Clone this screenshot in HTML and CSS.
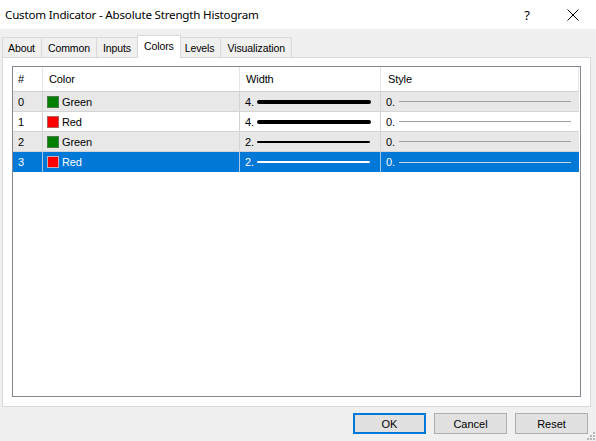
FILE: index.html
```html
<!DOCTYPE html>
<html>
<head>
<meta charset="utf-8">
<link rel="stylesheet" href="styles.css">
</head>
<body>
<div class="window">
  <div class="titlebar">
    <div class="title">Custom Indicator - Absolute Strength Histogram</div>
    <div class="tb-buttons">
      <span class="tb-help">?</span>
      <span class="tb-close"><svg width="12" height="12" viewBox="0 0 12 12"><path d="M0.5 0.5 L11.5 11.5 M11.5 0.5 L0.5 11.5" stroke="#000" stroke-width="1"/></svg></span>
    </div>
  </div>
  <div class="tabstrip">
    <div class="tab">About</div>
    <div class="tab">Common</div>
    <div class="tab">Inputs</div>
    <div class="tab active">Colors</div>
    <div class="tab">Levels</div>
    <div class="tab">Visualization</div>
  </div>
  <div class="panel">
    <div class="listview">
      <div class="row header">
        <div class="c c-num">#</div>
        <div class="c c-color">Color</div>
        <div class="c c-width">Width</div>
        <div class="c c-style">Style</div>
      </div>
      <div class="row odd">
        <div class="c c-num">0</div>
        <div class="c c-color"><span class="sw green"></span>Green</div>
        <div class="c c-width">4.<span class="ln w4"></span></div>
        <div class="c c-style">0.<span class="ln st"></span></div>
      </div>
      <div class="row">
        <div class="c c-num">1</div>
        <div class="c c-color"><span class="sw red"></span>Red</div>
        <div class="c c-width">4.<span class="ln w4"></span></div>
        <div class="c c-style">0.<span class="ln st"></span></div>
      </div>
      <div class="row odd">
        <div class="c c-num">2</div>
        <div class="c c-color"><span class="sw green"></span>Green</div>
        <div class="c c-width">2.<span class="ln w2"></span></div>
        <div class="c c-style">0.<span class="ln st"></span></div>
      </div>
      <div class="row selected">
        <div class="c c-num">3</div>
        <div class="c c-color"><span class="sw red"></span>Red</div>
        <div class="c c-width">2.<span class="ln w2"></span></div>
        <div class="c c-style">0.<span class="ln st"></span></div>
      </div>
    </div>
  </div>
  <div class="footer">
    <button class="btn default">OK</button>
    <button class="btn">Cancel</button>
    <button class="btn">Reset</button>
  </div>
  <div class="grip"><svg width="8" height="8" viewBox="0 0 8 8"><g fill="#b8b8b8"><rect x="6" y="0" width="2" height="2"/><rect x="3" y="3" width="2" height="2"/><rect x="6" y="3" width="2" height="2"/><rect x="0" y="6" width="2" height="2"/><rect x="3" y="6" width="2" height="2"/><rect x="6" y="6" width="2" height="2"/></g></svg></div>
</div>
</body>
</html>
```
FILE: styles.css
```css
html, body {
  margin: 0;
  padding: 0;
}
body {
  width: 596px;
  height: 441px;
  background: #f0f0f0;
  font-family: "Liberation Sans", Arial, sans-serif;
  font-size: 10.5px;
  letter-spacing: -0.1px;
  color: #000;
  overflow: hidden;
}
.window {
  position: relative;
  width: 596px;
  height: 441px;
  display: flex;
  flex-direction: column;
}
.titlebar {
  height: 29px;
  background: #fff;
  display: flex;
  align-items: center;
  justify-content: space-between;
  flex-shrink: 0;
}
.title {
  font-family: "Noto Sans", "Open Sans", sans-serif;
  font-size: 11.6px;
  padding-left: 5px;
  padding-bottom: 1px;
  letter-spacing: -0.2px;
}
.tb-buttons {
  display: flex;
  align-items: center;
  height: 29px;
}
.tb-help {
  font-family: "Noto Sans", sans-serif;
  font-size: 13px;
  width: 46px;
  text-align: center;
}
.tb-close {
  width: 46px;
  display: flex;
  justify-content: center;
}
.tabstrip {
  display: flex;
  align-items: flex-end;
  height: 22px;
  margin-top: 6px;
  padding-left: 2px;
  flex-shrink: 0;
  position: relative;
  z-index: 1;
}
.tab {
  height: 20px;
  box-sizing: border-box;
  border: 1px solid #d9d9d9;
  border-bottom: none;
  border-left: none;
  background: #f0f0f0;
  padding: 1px 6px 0 6px;
  display: flex;
  align-items: center;
}
.tab:first-child {
  border-left: 1px solid #d9d9d9;
  padding-left: 5px;
}
.tab.active {
  background: #fff;
  border-left: 1px solid #d9d9d9;
  margin-left: -1px;
  margin-right: -2px;
  padding: 0 6px 3px 6px;
  margin-bottom: -1px;
  height: 23px;
  position: relative;
}
.panel {
  margin: 0 5px 0 2px;
  height: 350px;
  box-sizing: border-box;
  background: #fff;
  border: 1px solid #d9d9d9;
  padding: 8px 9px 0 9px;
  flex-shrink: 0;
}
.listview {
  height: 331px;
  box-sizing: border-box;
  border: 1px solid #828790;
  background: #fff;
  font-size: 11px;
}
.row {
  display: flex;
  height: 20px;
  box-sizing: border-box;
  border-bottom: 1px solid #d4d4d4;
  width: 566px;
}
.row.header {
  height: 25px;
  border-bottom: 1px solid #d0d0d0;
}
.row.odd {
  background: #e8e8e8;
}
.row.selected {
  background: #0078d7;
  color: #fff;
  border-bottom: none;
}
.c {
  box-sizing: border-box;
  display: flex;
  align-items: center;
  border-right: 1px solid #d4d4d4;
  white-space: nowrap;
}
.header .c {
  border-right: 1px solid #e5e5e5;
  padding-bottom: 1px;
}
.selected .c {
  border-right: 1px solid #a8c8e8;
}
.c-num {
  width: 30px;
  padding-left: 5px;
}
.c-color {
  width: 197px;
  padding-left: 4px;
}
.header .c-color {
  padding-left: 6px;
}
.c-width {
  width: 141px;
  padding-left: 5px;
}
.header .c-width {
  padding-left: 6px;
}
.c-style {
  width: 198px;
  padding-left: 5px;
  border-right: none;
}
.header .c-style {
  padding-left: 7px;
}
.selected .c-style {
  border-right: none;
}
.sw {
  width: 12px;
  height: 12px;
  box-sizing: border-box;
  margin-right: 3px;
  border: 1px solid #7a7a7a;
}
.sw.green {
  background: #008000;
  border-color: #4a7a4a;
}
.sw.red {
  background: #ff0000;
  border-color: #b06060;
}
.selected .sw.red {
  border-color: #c0b0b8;
}
.ln {
  display: block;
  margin-left: 3px;
  background: #000;
}
.ln.w4 {
  width: 114px;
  height: 4px;
  border-radius: 2px;
}
.ln.w2 {
  width: 113px;
  height: 2px;
  border-radius: 1px;
}
.selected .ln.w2 {
  background: #fff;
}
.ln.st {
  width: 172px;
  height: 1px;
  background: #a0a0a0;
  margin-left: 4px;
}
.selected .ln.st {
  background: #c8d8e8;
}
.footer {
  display: flex;
  justify-content: flex-end;
  gap: 8px;
  padding: 6px 8px 0 0;
}
.btn {
  width: 73px;
  height: 21px;
  box-sizing: border-box;
  background: #e1e1e1;
  border: 1px solid #adadad;
  font-family: "Liberation Sans", Arial, sans-serif;
  font-size: 11px;
  color: #000;
  padding: 0;
  margin: 0;
}
.btn.default {
  border: 2px solid #0078d7;
}
.grip {
  position: absolute;
  right: 1px;
  bottom: 1px;
  width: 8px;
  height: 8px;
  line-height: 0;
}
```
